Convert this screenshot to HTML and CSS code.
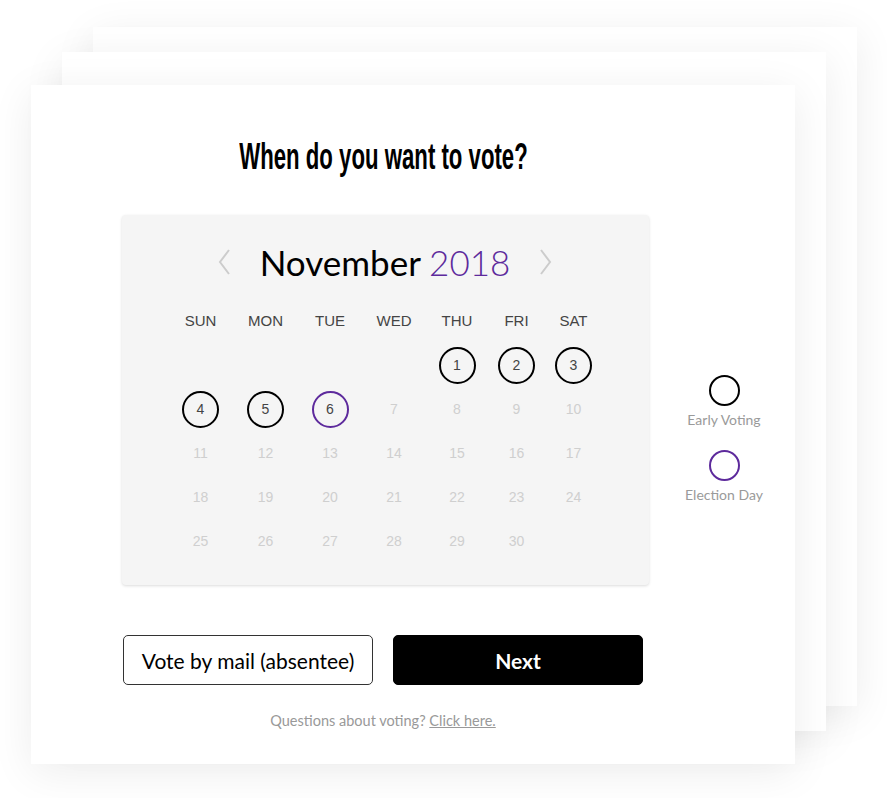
FILE: index.html
```html
<!DOCTYPE html>
<html lang="en">
<head>
<meta charset="utf-8">
<title>When do you want to vote?</title>
<link rel="stylesheet" href="styles.css">
</head>
<body>
<div class="stack">
  <div class="card card-back"></div>
  <div class="card card-mid"></div>
  <div class="card card-front">
    <div class="layout">
      <div class="main">
        <h1 class="title"><span class="title-text">When do you want to vote?</span></h1>
        <div class="calendar">
          <div class="cal-head">
            <svg class="chev" width="13" height="26" viewBox="0 0 13 26"><polyline points="11,1 2,13 11,25" fill="none" stroke="#cccccc" stroke-width="2"/></svg>
            <div class="month">November <span class="year">2018</span></div>
            <svg class="chev" width="13" height="26" viewBox="0 0 13 26"><polyline points="2,1 11,13 2,25" fill="none" stroke="#cccccc" stroke-width="2"/></svg>
          </div>
          <div class="grid names">
            <span>SUN</span><span>MON</span><span>TUE</span><span>WED</span><span>THU</span><span>FRI</span><span>SAT</span>
          </div>
          <div class="grid days">
            <span></span><span></span><span></span><span></span>
            <span class="d early">1</span><span class="d early">2</span><span class="d early">3</span>
            <span class="d early">4</span><span class="d early">5</span><span class="d election">6</span>
            <span class="d off">7</span><span class="d off">8</span><span class="d off">9</span><span class="d off">10</span>
            <span class="d off">11</span><span class="d off">12</span><span class="d off">13</span><span class="d off">14</span><span class="d off">15</span><span class="d off">16</span><span class="d off">17</span>
            <span class="d off">18</span><span class="d off">19</span><span class="d off">20</span><span class="d off">21</span><span class="d off">22</span><span class="d off">23</span><span class="d off">24</span>
            <span class="d off">25</span><span class="d off">26</span><span class="d off">27</span><span class="d off">28</span><span class="d off">29</span><span class="d off">30</span><span></span>
          </div>
        </div>
        <div class="actions">
          <button class="btn btn-outline">Vote by mail (absentee)</button>
          <button class="btn btn-solid">Next</button>
        </div>
        <p class="help">Questions about voting? <a href="#">Click here.</a></p>
      </div>
      <div class="legend">
        <div class="legend-item">
          <span class="ring ring-early"></span>
          <span class="legend-label">Early Voting</span>
        </div>
        <div class="legend-item">
          <span class="ring ring-election"></span>
          <span class="legend-label">Election Day</span>
        </div>
      </div>
    </div>
  </div>
</div>
</body>
</html>
```

FILE: styles.css
```css
* { box-sizing: border-box; }
html, body { margin: 0; padding: 0; background: #ffffff; }
body { font-family: "Lato", "Liberation Sans", sans-serif; }

.stack {
  display: grid;
  width: 887px;
  height: 798px;
}
.card {
  grid-area: 1 / 1;
  align-self: start;
  justify-self: start;
  width: 764px;
  height: 679px;
  background: #ffffff;
  box-shadow: 0 8px 40px rgba(0, 0, 0, 0.075);
}
.card-back { margin-left: 93px; margin-top: 27px; }
.card-mid { margin-left: 62px; margin-top: 52px; }
.card-front { margin-left: 31px; margin-top: 85px; }

.layout {
  display: flex;
  padding-left: 92px;
}
.main {
  width: 520px;
  display: flex;
  flex-direction: column;
}
.title {
  margin: 52px 0 0 0;
  height: 40px;
  line-height: 40px;
  text-align: center;
  font-family: "Liberation Sans", Arial, sans-serif;
  font-weight: bold;
  font-size: 37px;
  color: #000;
  white-space: nowrap;
}
.title-text {
  display: inline-block;
  transform: scaleX(0.6);
  transform-origin: center;
}

.calendar {
  margin: 38px 0 0 -1px;
  width: 527px;
  height: 370px;
  background: #f5f5f5;
  border-radius: 4px;
  box-shadow: 0 1px 3px rgba(0, 0, 0, 0.14);
  padding: 27px 0 0 46px;
}
.cal-head {
  width: 434px;
  height: 40px;
  display: flex;
  align-items: center;
  justify-content: center;
  gap: 29px;
}
.month {
  font-family: "Lato", sans-serif;
  font-size: 35px;
  line-height: 40px;
  color: #000;
  white-space: nowrap;
}
.year { color: #5d2a9c; font-weight: 300; }
.grid {
  display: grid;
  grid-template-columns: 65px 65px 64px 64px 62px 57px 57px;
  width: 434px;
}
.grid > span {
  display: flex;
  align-items: center;
  justify-content: center;
}
.names {
  margin-top: 28px;
  height: 20px;
}
.names > span {
  font-family: "Liberation Sans", Arial, sans-serif;
  font-size: 15px;
  color: #444;
  height: 20px;
}
.days {
  margin-top: 13px;
  grid-auto-rows: 44px;
}
.d {
  font-family: "Liberation Sans", Arial, sans-serif;
  font-size: 14px;
  color: #444;
}
.d.off { color: #cfcfcf; }
.d.early, .d.election {
  justify-self: center;
  align-self: center;
  width: 37px;
  height: 37px;
  border-radius: 50%;
  border: 2px solid #000;
}
.d.election { border-color: #5d2a9c; }

.actions {
  margin-top: 50px;
  display: flex;
  gap: 20px;
}
.btn {
  width: 250px;
  height: 50px;
  border-radius: 5px;
  font-family: "Lato", sans-serif;
  font-size: 21px;
  cursor: pointer;
  padding: 0;
}
.btn-outline {
  background: #fff;
  border: 1px solid #333;
  color: #000;
}
.btn-solid {
  background: #000;
  border: 1px solid #000;
  color: #fff;
  font-weight: bold;
}
.help {
  margin: 27px 0 0 0;
  line-height: 18px;
  text-align: center;
  font-family: "Lato", sans-serif;
  font-size: 14.5px;
  color: #999;
}
.help a { color: #999; text-decoration: underline; }

.legend {
  margin-left: 31px;
  width: 100px;
  padding-top: 290px;
  display: flex;
  flex-direction: column;
  gap: 21px;
}
.legend-item {
  display: flex;
  flex-direction: column;
  align-items: center;
  gap: 5px;
}
.ring {
  width: 31px;
  height: 31px;
  border-radius: 50%;
  border: 2px solid #000;
}
.ring-election { border-color: #5d2a9c; }
.legend-label {
  font-family: "Lato", sans-serif;
  font-size: 14px;
  line-height: 18px;
  color: #9a9a9a;
  white-space: nowrap;
}
```
